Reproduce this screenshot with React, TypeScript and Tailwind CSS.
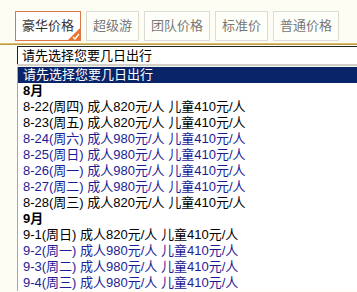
import React from "react";

const tabs = ["豪华价格", "超级游", "团队价格", "标准价", "普通价格"];

type Row = { text: string; kind: "month" | "black" | "blue" };

const rows: Row[] = [
  { text: "8月", kind: "month" },
  { text: "8-22(周四) 成人820元/人 儿童410元/人", kind: "black" },
  { text: "8-23(周五) 成人820元/人 儿童410元/人", kind: "black" },
  { text: "8-24(周六) 成人980元/人 儿童410元/人", kind: "blue" },
  { text: "8-25(周日) 成人980元/人 儿童410元/人", kind: "blue" },
  { text: "8-26(周一) 成人980元/人 儿童410元/人", kind: "blue" },
  { text: "8-27(周二) 成人980元/人 儿童410元/人", kind: "blue" },
  { text: "8-28(周三) 成人820元/人 儿童410元/人", kind: "black" },
  { text: "9月", kind: "month" },
  { text: "9-1(周日) 成人820元/人 儿童410元/人", kind: "black" },
  { text: "9-2(周一) 成人980元/人 儿童410元/人", kind: "blue" },
  { text: "9-3(周二) 成人980元/人 儿童410元/人", kind: "blue" },
  { text: "9-4(周三) 成人980元/人 儿童410元/人", kind: "blue" },
];

export default function App() {
  return (
    <div
      className="w-[357px] h-[292px] overflow-hidden bg-[#fefdf3] text-[13px]"
      style={{ fontFamily: '"Liberation Sans", "Noto Sans CJK SC", sans-serif' }}
    >
      {/* Price tabs */}
      <div className="flex gap-[5px] pl-[15px] pt-[11px] h-[43px]">
        {tabs.map((t, i) => (
          <div
            key={t}
            className={`relative h-[30px] px-[6px] flex items-center border ${
              i === 0
                ? "border-[#d9794a] bg-white text-[#333]"
                : "border-[#dcdcd4] bg-[#fffffa] text-[#777]"
            }`}
          >
            {t}
            {i === 0 && (
              <svg className="absolute right-0 bottom-0" width="12" height="12" viewBox="0 0 12 12">
                <polygon points="12,0 12,12 0,12" fill="#e8742e" />
                <path d="M5 9 L7 11 L11 6" stroke="#fff" strokeWidth="1.4" fill="none" />
              </svg>
            )}
          </div>
        ))}
      </div>
      <div className="h-[2px] bg-[#dcc06a] border-b border-[#b89a48]" />

      {/* Select */}
      <div className="ml-[17px] mt-[1px] h-[18px] bg-white border-l border-t border-[#222] flex items-center pl-[4px] text-black leading-[16px]">
        请先选择您要几日出行
      </div>
      <div className="ml-[17px] h-[3px] bg-[#d4d0c8] border-b border-[#f4f4ee]" />

      {/* Dropdown list */}
      <div className="ml-[17px] border-l border-[#a8a8a0] bg-white leading-[16px]">
        <div className="h-[16px] bg-[#0a246a] text-white pl-[5px]">请先选择您要几日出行</div>
        {rows.map((r, i) => (
          <div
            key={i}
            className={`h-[16px] pl-[5px] whitespace-nowrap ${
              r.kind === "month"
                ? "font-bold text-black"
                : r.kind === "blue"
                ? "text-[#1c1c96]"
                : "text-black"
            }`}
          >
            {r.text}
          </div>
        ))}
      </div>
    </div>
  );
}
